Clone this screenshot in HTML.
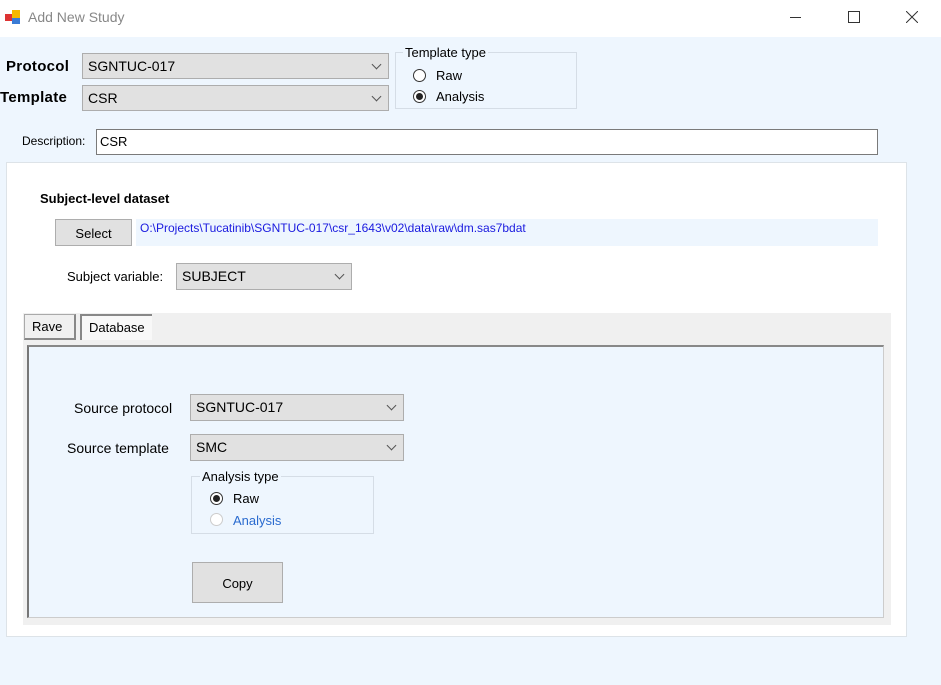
<!DOCTYPE html><html><head><style>
body{margin:0;width:941px;height:685px;background:#eef6fe;position:relative;overflow:hidden;font-family:"Liberation Sans",sans-serif;font-size:13px;color:#000}
.a{position:absolute}
.cb{position:absolute;background:#e1e1e1;border:1px solid #adadad;box-sizing:border-box;padding:4px 5px 0;font-size:14px}
.cb:after{content:"";position:absolute;right:8px;top:7px;width:6px;height:6px;border-right:1px solid #555;border-bottom:1px solid #555;transform:rotate(45deg)}
.rad{position:absolute;width:13px;height:13px;border:1px solid #333;border-radius:50%;background:#fff;box-sizing:border-box}
.rad.on:after{content:"";position:absolute;left:2px;top:2px;width:7px;height:7px;border-radius:50%;background:#222}
.btn{position:absolute;background:#e1e1e1;border:1px solid #adadad;box-sizing:border-box;text-align:center;font-size:13px}
</style></head><body>
<div class="a" style="left:0;top:0;width:941px;height:37px;background:#fff"></div>
<svg class="a" style="left:5px;top:9px" width="16" height="16"><rect x="0" y="5" width="7" height="7" fill="#d33"/><rect x="7" y="1" width="8" height="8" fill="#f5b800"/><rect x="7" y="9" width="8" height="6" fill="#3a7bd5"/></svg>
<div class="a" style="left:28px;top:9px;font-size:14px;color:#888">Add New Study</div>
<div class="a" style="left:790px;top:17px;width:11px;height:1px;background:#333"></div>
<div class="a" style="left:848px;top:11px;width:10px;height:10px;border:1px solid #333"></div>
<svg class="a" style="left:906px;top:11px" width="12" height="12"><path d="M0 0L12 12M12 0L0 12" stroke="#333" stroke-width="1"/></svg>

<div class="a" style="left:6px;top:58px;font-weight:bold;font-size:15px;letter-spacing:0.3px">Protocol</div>
<div class="a" style="left:0;top:89px;font-weight:bold;font-size:15px;letter-spacing:0.3px">Template</div>
<div class="cb" style="left:82px;top:53px;width:307px;height:26px">SGNTUC-017</div>
<div class="cb" style="left:82px;top:85px;width:307px;height:26px">CSR</div>
<div class="a" style="left:395px;top:52px;width:182px;height:57px;border:1px solid #d5dde6;box-sizing:border-box"></div>
<div class="a" style="left:403px;top:45px;background:#eef6fe;padding:0 2px">Template type</div>
<div class="rad" style="left:413px;top:69px"></div><div class="a" style="left:436px;top:68px">Raw</div>
<div class="rad on" style="left:413px;top:90px"></div><div class="a" style="left:436px;top:89px">Analysis</div>
<div class="a" style="left:22px;top:134px;font-size:12px">Description:</div>
<div class="a" style="left:96px;top:129px;width:782px;height:26px;border:1px solid #7a7a7a;background:#fff;box-sizing:border-box;padding:4px 3px;font-size:13px">CSR</div>

<div class="a" style="left:6px;top:162px;width:901px;height:475px;background:#fff;border:1px solid #dde3e8;box-sizing:border-box"></div>
<div class="a" style="left:40px;top:191px;font-weight:bold;font-size:13px">Subject-level dataset</div>
<div class="btn" style="left:55px;top:219px;width:77px;height:27px;padding-top:6px">Select</div>
<div class="a" style="left:136px;top:219px;width:742px;height:27px;background:#eef6fe;color:#1a1adf;font-size:12px;padding:2px 4px;box-sizing:border-box">O:\Projects\Tucatinib\SGNTUC-017\csr_1643\v02\data\raw\dm.sas7bdat</div>
<div class="a" style="left:67px;top:269px;font-size:13px">Subject variable:</div>
<div class="cb" style="left:176px;top:263px;width:176px;height:27px">SUBJECT</div>

<div class="a" style="left:23px;top:313px;width:868px;height:312px;background:#f0f0f0"></div>
<div class="a" style="left:24px;top:314px;width:52px;height:26px;border:1px solid #aaa;border-bottom:2px solid #888;border-right:2px solid #888;background:#f0f0f0;box-sizing:border-box;padding:4px 7px">Rave</div>
<div class="a" style="left:80px;top:314px;width:72px;height:26px;border-left:2px solid #888;border-top:2px solid #888;background:#f8f8f8;box-sizing:border-box;padding:4px 7px">Database</div>
<div class="a" style="left:27px;top:345px;width:857px;height:273px;background:#eef6fe;border-left:2px solid #777;border-top:2px solid #888;border-right:1px solid #ccc;border-bottom:1px solid #ccc;box-sizing:border-box"></div>
<div class="a" style="left:74px;top:400px;font-size:14px">Source protocol</div>
<div class="cb" style="left:190px;top:394px;width:214px;height:27px">SGNTUC-017</div>
<div class="a" style="left:67px;top:440px;font-size:14px">Source template</div>
<div class="cb" style="left:190px;top:434px;width:214px;height:27px">SMC</div>
<div class="a" style="left:191px;top:476px;width:183px;height:58px;border:1px solid #d5dde6;box-sizing:border-box"></div>
<div class="a" style="left:200px;top:469px;background:#eef6fe;padding:0 2px">Analysis type</div>
<div class="rad on" style="left:210px;top:492px"></div><div class="a" style="left:233px;top:491px">Raw</div>
<div class="rad" style="left:210px;top:513px;border-color:#ccc"></div><div class="a" style="left:233px;top:513px;color:#2a6bcf">Analysis</div>
<div class="btn" style="left:192px;top:562px;width:91px;height:41px;padding-top:13px">Copy</div>
</body></html>
